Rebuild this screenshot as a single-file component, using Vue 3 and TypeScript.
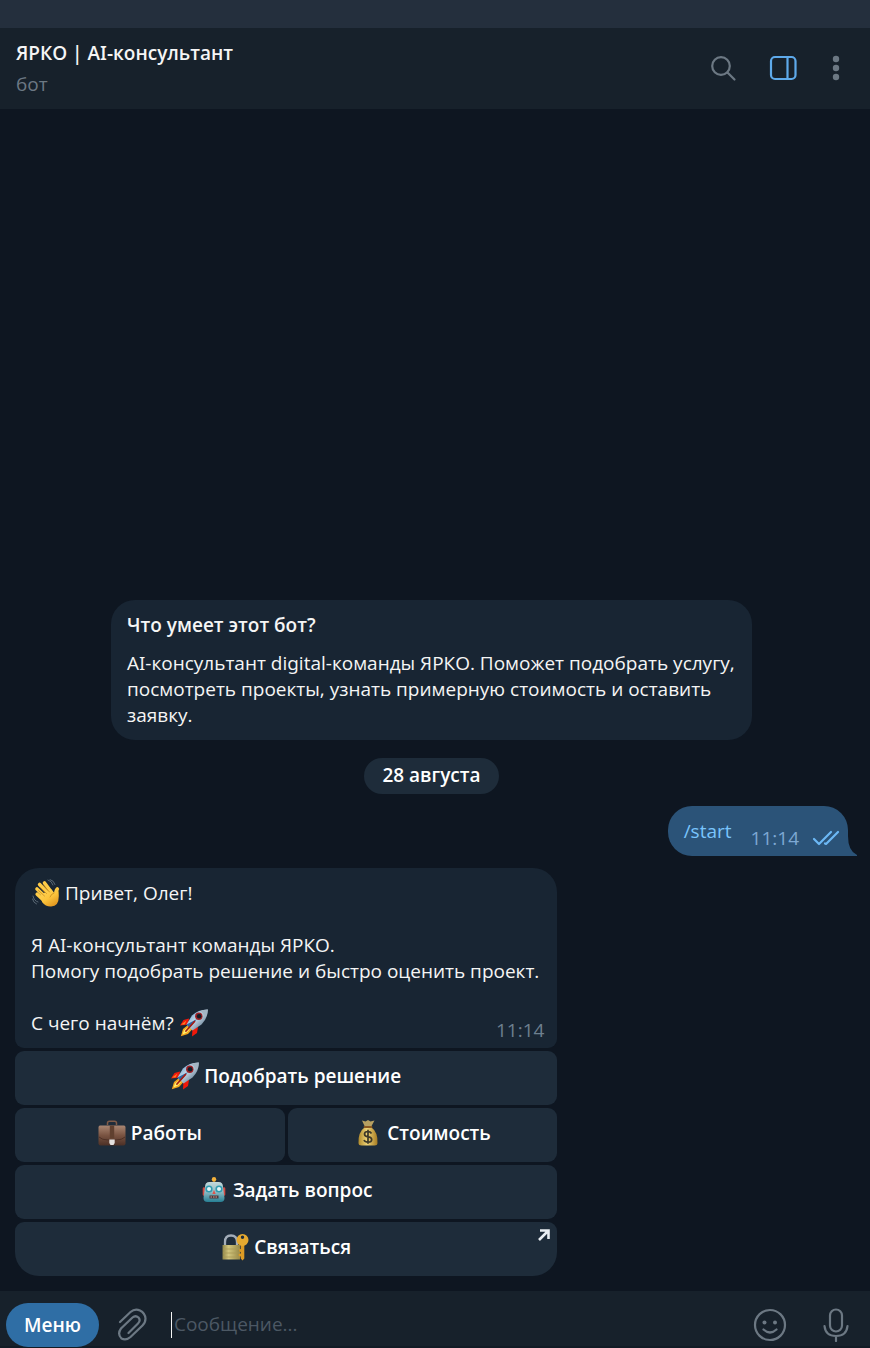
<script setup lang="ts">
import { ref, onMounted } from 'vue'

interface BotAction {
  label: string
  emoji: string
  half?: boolean
  external?: boolean
}

const actions: BotAction[] = [
  { label: 'Подобрать решение', emoji: 'rocket' },
  { label: 'Работы', emoji: 'case', half: true },
  { label: 'Стоимость', emoji: 'money', half: true },
  { label: 'Задать вопрос', emoji: 'robot' },
  { label: 'Связаться', emoji: 'lock', external: true },
]

const draft = ref('')
const field = ref<HTMLInputElement | null>(null)
onMounted(() => field.value?.focus())
</script>

<template>
  <div class="app">
    <svg class="defs" aria-hidden="true">
      <defs>
        <linearGradient id="g-hand" x1="0" y1="0" x2="0.6" y2="1">
          <stop offset="0" stop-color="#ffd75e" /><stop offset="0.6" stop-color="#fcc43c" /><stop offset="1" stop-color="#e39a22" />
        </linearGradient>
        <linearGradient id="g-body" x1="0" y1="0" x2="1" y2="1">
          <stop offset="0" stop-color="#3f86c4" /><stop offset="0.45" stop-color="#c3d7e6" /><stop offset="1" stop-color="#3e566e" />
        </linearGradient>
        <linearGradient id="g-case" x1="0" y1="0" x2="0" y2="1">
          <stop offset="0" stop-color="#a98672" /><stop offset="0.5" stop-color="#795341" /><stop offset="1" stop-color="#4c3026" />
        </linearGradient>
        <linearGradient id="g-bag" x1="0" y1="0" x2="1" y2="0">
          <stop offset="0" stop-color="#b08a2c" /><stop offset="0.45" stop-color="#efd477" /><stop offset="1" stop-color="#a67b22" />
        </linearGradient>
        <linearGradient id="g-bot" x1="0" y1="0" x2="0" y2="1">
          <stop offset="0" stop-color="#c3d9dc" /><stop offset="0.5" stop-color="#8fbac2" /><stop offset="1" stop-color="#267f94" />
        </linearGradient>
        <linearGradient id="g-lock" x1="0" y1="0" x2="1" y2="0">
          <stop offset="0" stop-color="#8f8548" /><stop offset="0.35" stop-color="#d2c67e" /><stop offset="1" stop-color="#978846" />
        </linearGradient>
      </defs>
      <symbol id="wave" viewBox="0 0 28 28">
        <path d="M16 1q4 1 5 5M18 .5q4 1 5 5M1 17q1 5 5 6M.5 20q1 4 4 5" fill="none" stroke="#596875" stroke-width="1" stroke-linecap="round" />
        <g stroke="#fecb47" stroke-linecap="round" stroke-width="3.6" fill="none">
          <path d="M5.2 15.2l7 6.500M5 10l9 8.500M7.600 5.500l9 9.500M12.500 4l7.500 10" />
          <path d="M25.300 10q-2 2-1 7" />
        </g>
        <path d="M9 16l10-6 3 4q1-3 3.800-5.500 1 4 1 8.500 0 11-8.300 10.500-5 0-8.500-4.500z" fill="url(#g-hand)" />
        <path d="M6.500 11.500l6 5.500M8.500 8.500l6 6M11.500 6l6 7M22 14q-3 1-4 4" fill="none" stroke="#c98a1c" stroke-width=".8" stroke-linecap="round" />
      </symbol>
      <symbol id="rocket" viewBox="0 0 28 28">
        <path d="M9 9.500L3.500 11 0 16.500l8-1zM18 18l-1 6-5 3.500.5-8z" fill="#f0180a" />
        <path d="M1 15.500l5.500-4-2 4z" fill="#ff7d20" />
        <path d="M8 16L3 20 .8 27.300 8 25l4.500-5z" fill="#f4a51d" />
        <path d="M7.500 18.500L4 21.500 2.500 25.500 7 23.500l3-3.500z" fill="#fff06a" />
        <path d="M27.800.5Q18 .5 12 6.500L6.500 15.500l6 6 9-6Q28 9 27.800.5z" fill="url(#g-body)" />
        <path d="M27.800.5q-5 0-7.500 1.500l5.500 6q2-4 2-7.500z" fill="#a4b5c4" />
        <path d="M6.500 15.500L17 10l-7.500 9z" fill="#2d68a6" />
        <path d="M14.500 12.500L6 22" stroke="#a51c14" stroke-width="1.800" stroke-linecap="round" />
        <circle cx="18.800" cy="7.200" r="3.700" fill="#9c2025" />
        <circle cx="19.100" cy="7.200" r="2.300" fill="#111c27" />
      </symbol>
      <symbol id="case" viewBox="0 0 28 28">
        <path d="M9.500 6V4q0-1.800 2-1.800h5q2 0 2 1.800v2" fill="none" stroke="#805b48" stroke-width="1.500" />
        <path d="M2 6.500h24q1.500 0 1.500 2v16q0 2-2 2h-23q-2 0-2-2v-16q0-2 1.500-2z" fill="url(#g-case)" />
        <path d="M1 18q3 3 9 3h8q6 0 9-3" fill="none" stroke="#4e3126" stroke-width="1" />
        <path d="M11.800 6.500h4.400v13h-4.400z" fill="#60402f" />
        <path d="M11.300 20.500h5.400v3.500l-1.200 2h-3l-1.200-2z" fill="#e4e1df" />
      </symbol>
      <symbol id="money" viewBox="0 0 28 28">
        <path d="M8 1.500l3.500 1L14 1l2.500 1.500 4-1L17 8h-6z" fill="#b7a061" />
        <path d="M11 8h6q7 5 6.500 16 0 2.500-3 2.500h-13q-3 0-3-2.500Q4 13 11 8z" fill="url(#g-bag)" />
        <path d="M10.500 8h7" stroke="#8a5921" stroke-width="1.800" stroke-linecap="round" />
        <path d="M17.500 14.500q-1-2-3.500-2-3.500 0-3.500 2.500T14 17.800t3.700 2.700q0 2.700-3.700 2.700-3 0-4-2.200M14 10.800v14" fill="none" stroke="#3e3928" stroke-width="1.700" />
      </symbol>
      <symbol id="robot" viewBox="0 0 28 28">
        <path d="M4 12.500v6M24 12.500v6" stroke="#d14b43" stroke-width="2.600" stroke-linecap="round" />
        <path d="M14 3v5" stroke="#9a7936" stroke-width="2.600" />
        <circle cx="14" cy="3.200" r="2.200" fill="#f4b13a" />
        <path d="M9.500 6h9q4.500 0 4.500 5l1.500 11q0 4-4 4h-13q-4 0-4-4L5 11q0-5 4.500-5z" fill="url(#g-bot)" />
        <circle cx="9" cy="13" r="2.800" fill="#e3f4f6" stroke="#309baf" stroke-width="1.600" />
        <circle cx="19" cy="13" r="2.800" fill="#e3f4f6" stroke="#309baf" stroke-width="1.600" />
        <path d="M14 14l1.700 4h-3.400z" fill="#df554d" />
        <path d="M9.500 19.500h9v3h-9z" fill="#4b393d" />
        <path d="M10.500 21h7" stroke="#df9a91" stroke-width="1.200" stroke-dasharray="1.500 1" />
      </symbol>
      <symbol id="lock" viewBox="0 0 28 28">
        <path d="M4 13V9q0-6.500 6-6.500T16 9v4" fill="none" stroke="#a3adb9" stroke-width="2.300" />
        <path d="M1.500 12H19v14.500H1.500z" fill="url(#g-lock)" />
        <path d="M2 16h17M2 20h17M2 24h17" stroke="#aa9b57" stroke-width=".8" />
        <path d="M19.700 11h3.600v14.500L21.500 27.500l-1.800-2v-2l-2-.5v-2l2-.5v-1.500l-1.500-.5v-2l1.500-.5z" fill="#dc9b25" />
        <path fill-rule="evenodd" d="M21.500 1a6 6 0 1 0 0 12 6 6 0 1 0 0-12zm0 1.500a1.700 1.700 0 1 1 0 3.400 1.700 1.700 0 1 1 0-3.400z" fill="#e5a930" />
      </symbol>
    </svg>

    <div class="titlebar"></div>

    <header class="header">
      <div class="peer">
        <h1 class="name">ЯРКО | AI-консультант</h1>
        <p class="status">бот</p>
      </div>
      <nav class="tools">
        <button class="tool" type="button" aria-label="Поиск">
          <svg width="28" height="28" viewBox="0 0 28 28" fill="none" stroke="#6c7883" stroke-width="2.200" stroke-linecap="round">
            <circle cx="12" cy="12" r="8.800" /><path d="M18.500 18.500l7 7" />
          </svg>
        </button>
        <button class="tool" type="button" aria-label="Боковая панель">
          <svg width="28" height="28" viewBox="0 0 28 28" fill="none" stroke="#5eaaeb" stroke-width="2.200">
            <rect x="2" y="3" width="24.500" height="22" rx="4" /><path d="M18.500 3v22" />
          </svg>
        </button>
        <button class="tool" type="button" aria-label="Меню чата">
          <svg width="28" height="28" viewBox="0 0 28 28" fill="#6c7883">
            <circle cx="14" cy="5" r="3.200" /><circle cx="14" cy="14" r="3.200" /><circle cx="14" cy="23" r="3.200" />
          </svg>
        </button>
      </nav>
    </header>

    <main class="chat">
      <section class="about">
        <h2 class="about-title">Что умеет этот бот?</h2>
        <p class="about-text">AI-консультант digital-команды ЯРКО. Поможет подобрать услугу, посмотреть проекты, узнать примерную стоимость и оставить заявку.</p>
      </section>

      <div class="date">28 августа</div>

      <div class="outgoing">
        <a class="command" href="#start">/start</a>
        <span class="sent">
          <time>11:14</time>
          <svg width="28" height="16" viewBox="0 0 28 16" fill="none" stroke="#6cb8f5" stroke-width="2.200" stroke-linecap="round" stroke-linejoin="round">
            <path d="M2 9l5 5L19 2M13 13.500l1 .5 12-12" />
          </svg>
        </span>
        <svg class="tail" width="10" height="20" viewBox="0 0 10 20"><path d="M0 0h1q0 15 9 19v1H0z" fill="#2b5378" /></svg>
      </div>

      <div class="incoming">
        <article class="bubble">
          <p class="line"><svg class="emoji" role="img" aria-label="👋"><use href="#wave" /></svg><span>Привет, Олег!</span></p>
          <p class="line gap">Я AI-консультант команды ЯРКО.</p>
          <p class="line">Помогу подобрать решение и быстро оценить проект.</p>
          <p class="line gap"><span>С чего начнём?</span><svg class="emoji" role="img" aria-label="🚀"><use href="#rocket" /></svg></p>
          <time class="stamp">11:14</time>
        </article>
        <div class="keyboard">
          <button v-for="a in actions" :key="a.label" type="button" class="key" :class="{ half: a.half }">
            <svg class="emoji" aria-hidden="true"><use :href="'#' + a.emoji" /></svg>
            <span>{{ a.label }}</span>
            <svg v-if="a.external" class="external" width="12" height="12" viewBox="0 0 12 12" fill="none" stroke="#e9eef2" stroke-width="2.600">
              <path d="M1 11l9-9M2 1.500h8.500V10" />
            </svg>
          </button>
        </div>
      </div>
    </main>

    <footer class="composer">
      <button class="menu" type="button">Меню</button>
      <button class="attach" type="button" aria-label="Прикрепить файл">
        <svg width="32" height="36" viewBox="0 0 32 36" fill="none" stroke="#6c7883" stroke-width="2.200" stroke-linecap="round">
          <path d="M3 15L13.500 5Q18 1 23 3.500 28 6 28.500 11.500 28.500 15.500 25.500 18.500L13.500 30Q9 34 4.500 31.500 0 27 4 21.500L15.500 10.500Q18.500 8 21.500 10.500 24 13.500 21 16.500L11.500 26" />
        </svg>
      </button>
      <span v-if="!draft" class="caret"></span>
      <input ref="field" v-model="draft" class="field" :class="{ empty: !draft }" type="text" placeholder="Сообщение..." aria-label="Сообщение" />
      <button class="round" type="button" aria-label="Эмодзи">
        <svg width="34" height="34" viewBox="0 0 34 34" fill="none" stroke="#6c7883" stroke-width="2.200" stroke-linecap="round">
          <circle cx="17" cy="17" r="15" />
          <circle cx="11.500" cy="14.500" r="2" fill="#6c7883" stroke="none" /><circle cx="22" cy="14.500" r="2" fill="#6c7883" stroke="none" />
          <path d="M10.500 21.500q6.500 6 13 0" />
        </svg>
      </button>
      <button class="round" type="button" aria-label="Голосовое сообщение">
        <svg width="34" height="34" viewBox="0 0 34 34" fill="none" stroke="#6c7883" stroke-width="2.200" stroke-linecap="round">
          <rect x="11" y="1.500" width="12" height="22" rx="6" /><path d="M5.500 18q1 10 11.500 10t11.500-10M17 28v5" />
        </svg>
      </button>
    </footer>
  </div>
</template>

<style>
body { margin: 0; background: #0e1621; }
</style>

<style scoped>
.app {
  display: flex;
  flex-direction: column;
  min-height: 100vh;
  background: #0e1621;
  color: #f5f5f5;
  font-family: "Open Sans", "Noto Sans", sans-serif;
  font-feature-settings: "ss01";
  font-size: 19px;
  line-height: 26px;
}
.defs { position: absolute; width: 0; height: 0; }
h1, h2, p { margin: 0; font-size: inherit; }
button { border: 0; padding: 0; background: none; color: inherit; font: inherit; cursor: pointer; }
svg { display: block; }

.titlebar { height: 28px; background: #242f3d; }
.header {
  display: flex;
  justify-content: space-between;
  align-items: center;
  box-sizing: border-box;
  height: 81px;
  padding: 0 20px 1px 16px;
  background: #17212b;
}
.name { font-weight: 600; line-height: 32px; }
.status { color: #6c7883; line-height: 30px; }
.tools { display: flex; align-items: center; }
.tool + .tool { margin-left: 32px; }
.tool:last-child { margin-left: 25px; }

.chat {
  flex: 1;
  display: flex;
  flex-direction: column;
  justify-content: flex-end;
  padding: 15px 22px 15px 15px;
}
.about {
  align-self: center;
  box-sizing: border-box;
  max-width: 641px;
  padding: 12px 15px 12px 16px;
  border-radius: 24px;
  background: #182533;
}
.about-title { margin-bottom: 12px; font-weight: 600; }
.date {
  align-self: center;
  margin: 18px 0 12px;
  padding: 4px 18px 6px;
  border-radius: 18px;
  background: #1e2c3a;
  color: #fff;
  font-weight: 600;
}
.outgoing {
  position: relative;
  align-self: flex-end;
  display: flex;
  gap: 19px;
  padding: 12px 8px 12px 16px;
  border-radius: 24px 24px 0 24px;
  background: #2b5378;
}
.command { color: #79c4fc; text-decoration: none; }
.sent { display: flex; align-items: center; gap: 13px; height: 26px; margin-top: 7px; margin-bottom: -7px; color: #7da8d3; }
.tail { position: absolute; right: -9px; bottom: 0; }
.incoming { align-self: flex-start; margin-top: 12px; max-width: 100%; }
.bubble {
  position: relative;
  padding: 12px 18px 12px 16px;
  border-radius: 24px 24px 9px 9px;
  background: #182533;
}
.line { display: flex; align-items: center; gap: 5px; min-height: 26px; }
.gap { margin-top: 26px; }
.emoji { width: 28px; height: 28px; flex: none; }
.line .emoji { margin: -1px 0 -1px 1px; }
.stamp { position: absolute; right: 13px; bottom: 5px; color: #6d7f8f; }
.keyboard { display: grid; grid-template-columns: 1fr 1fr; gap: 3px; margin-top: 3px; }
.key {
  position: relative;
  grid-column: span 2;
  display: flex;
  justify-content: center;
  align-items: center;
  gap: 5px;
  height: 54px;
  padding-bottom: 4px;
  border-radius: 9px;
  background: #1e2c3a;
  color: #fff;
  font-weight: 600;
}
.key.half { grid-column: span 1; }
.key:last-child { border-radius: 9px 9px 24px 24px; }
.external { position: absolute; top: 7px; right: 7px; }

.composer {
  display: flex;
  align-items: center;
  height: 44px;
  padding: 12px 17px 1px 6px;
  background: #17212b;
  box-shadow: inset 0 -2px #121b25;
}
.menu { height: 44px; padding: 0 18px; border-radius: 22px; background: #2f6ea5; color: #fff; font-weight: 600; }
.attach { margin: 0 22px 0 18px; }
.caret { width: 1px; height: 26px; background: #f5f5f5; }
.field {
  flex: 1;
  min-width: 0;
  height: 26px;
  padding: 0 2px 2px;
  border: 0;
  outline: 0;
  background: transparent;
  color: #f5f5f5;
  caret-color: #f5f5f5;
  font: inherit;
}
.field.empty { caret-color: transparent; }
.field::placeholder { color: #4c5864; opacity: 1; }
.round + .round { margin-left: 32px; }
</style>
